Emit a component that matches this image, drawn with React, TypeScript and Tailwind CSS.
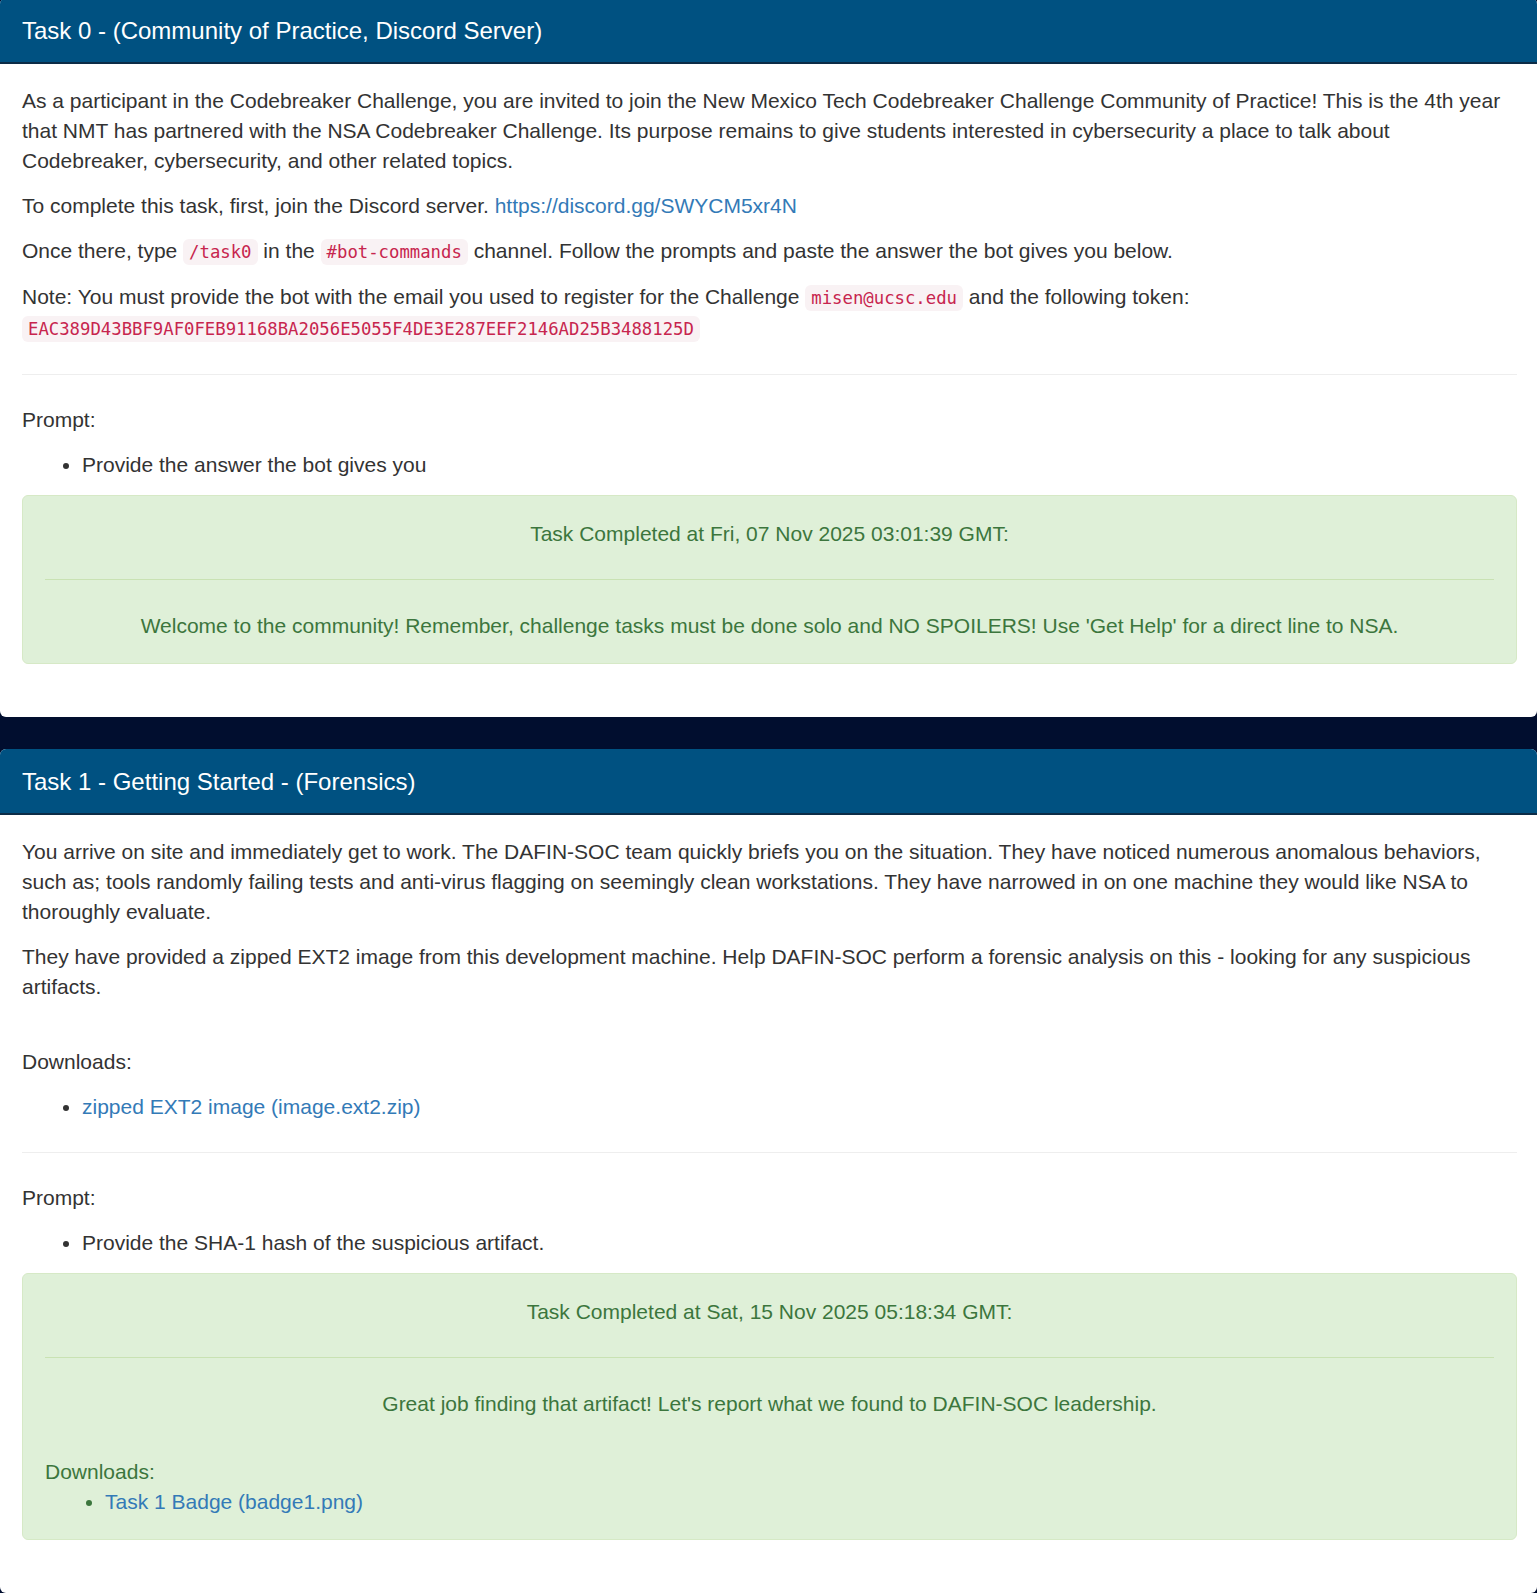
import type { ReactNode } from "react";

const mono = "font-['DejaVu_Sans_Mono','Liberation_Mono',monospace]";

function Code({ children }: { children: ReactNode }) {
  return (
    <code
      className={`${mono} text-[17.3px] text-[#c7254e] bg-[#f9f2f4] rounded-[6px] px-[6px] py-[3px]`}
    >
      {children}
    </code>
  );
}

function Link({ children }: { children: ReactNode }) {
  return (
    <a href="#" className="text-[#337ab7] hover:underline">
      {children}
    </a>
  );
}

function Panel({ title, children }: { title: string; children: ReactNode }) {
  return (
    <section className="bg-white rounded-[6px] mb-[32px] overflow-hidden">
      <div className="h-[66px] flex items-center px-[22px] pt-[3px] bg-[#005181] border-b-2 border-[#0c2c47]">
        <h3 className="text-white text-[24px] leading-[1.1]">{title}</h3>
      </div>
      <div className="pl-[22px] pr-[20px] pt-[22px] pb-[23px]">{children}</div>
    </section>
  );
}

function Completed({
  date,
  message,
  downloads,
}: {
  date: string;
  message: string;
  downloads?: string[];
}) {
  return (
    <div className="bg-[#dff0d8] border border-[#d6e9c6] rounded-[6px] px-[22px] pt-[23px] pb-[22px] mb-[30px] text-[#3c763d]">
      <div className="text-center">Task Completed at {date}:</div>
      <hr className="mt-[30px] mb-[31px] border-t border-[#c9e2b3]" />
      <div className="text-center">{message}</div>
      {downloads && (
        <div className="mt-[38px]">
          <div>Downloads:</div>
          <ul className="list-disc pl-[60px]">
            {downloads.map((d) => (
              <li key={d}>
                <Link>{d}</Link>
              </li>
            ))}
          </ul>
        </div>
      )}
    </div>
  );
}

export default function App() {
  return (
    <div className="min-h-screen bg-[#010e2f] font-['Liberation_Sans',Arial,sans-serif] text-[21px] leading-[30px] text-[#333]">
      <div className="-mt-[2px]">
        <Panel title="Task 0 - (Community of Practice, Discord Server)">
          <p className="mb-[15px]">
            As a participant in the Codebreaker Challenge, you are invited to join the New Mexico Tech
            Codebreaker Challenge Community of Practice! This is the 4th year that NMT has partnered
            with the NSA Codebreaker Challenge. Its purpose remains to give students interested in
            cybersecurity a place to talk about Codebreaker, cybersecurity, and other related topics.
          </p>
          <p className="mb-[15px]">
            To complete this task, first, join the Discord server.{" "}
            <Link>https://discord.gg/SWYCM5xr4N</Link>
          </p>
          <p className="mb-[15px]">
            Once there, type <Code>/task0</Code> in the <Code>#bot-commands</Code> channel. Follow the
            prompts and paste the answer the bot gives you below.
          </p>
          <p>
            Note: You must provide the bot with the email you used to register for the Challenge{" "}
            <Code>misen@ucsc.edu</Code> and the following token:{" "}
            <Code>EAC389D43BBF9AF0FEB91168BA2056E5055F4DE3E287EEF2146AD25B3488125D</Code>
          </p>
          <hr className="my-[30px] border-t border-[#eee]" />
          <p className="mb-[15px]">Prompt:</p>
          <ul className="list-disc pl-[60px] mb-[15px]">
            <li>Provide the answer the bot gives you</li>
          </ul>
          <Completed
            date="Fri, 07 Nov 2025 03:01:39 GMT"
            message="Welcome to the community! Remember, challenge tasks must be done solo and NO SPOILERS! Use 'Get Help' for a direct line to NSA."
          />
        </Panel>

        <Panel title="Task 1 - Getting Started - (Forensics)">
          <p className="mb-[15px]">
            You arrive on site and immediately get to work. The DAFIN-SOC team quickly briefs you on
            the situation. They have noticed numerous anomalous behaviors, such as; tools randomly
            failing tests and anti-virus flagging on seemingly clean workstations. They have narrowed
            in on one machine they would like NSA to thoroughly evaluate.
          </p>
          <p className="mb-[15px]">
            They have provided a zipped EXT2 image from this development machine. Help DAFIN-SOC
            perform a forensic analysis on this - looking for any suspicious artifacts.
          </p>
          <p className="mt-[45px] mb-[15px]">Downloads:</p>
          <ul className="list-disc pl-[60px]">
            <li>
              <Link>zipped EXT2 image (image.ext2.zip)</Link>
            </li>
          </ul>
          <hr className="my-[30px] border-t border-[#eee]" />
          <p className="mb-[15px]">Prompt:</p>
          <ul className="list-disc pl-[60px] mb-[15px]">
            <li>Provide the SHA-1 hash of the suspicious artifact.</li>
          </ul>
          <Completed
            date="Sat, 15 Nov 2025 05:18:34 GMT"
            message="Great job finding that artifact! Let's report what we found to DAFIN-SOC leadership."
            downloads={["Task 1 Badge (badge1.png)"]}
          />
        </Panel>
      </div>
    </div>
  );
}
